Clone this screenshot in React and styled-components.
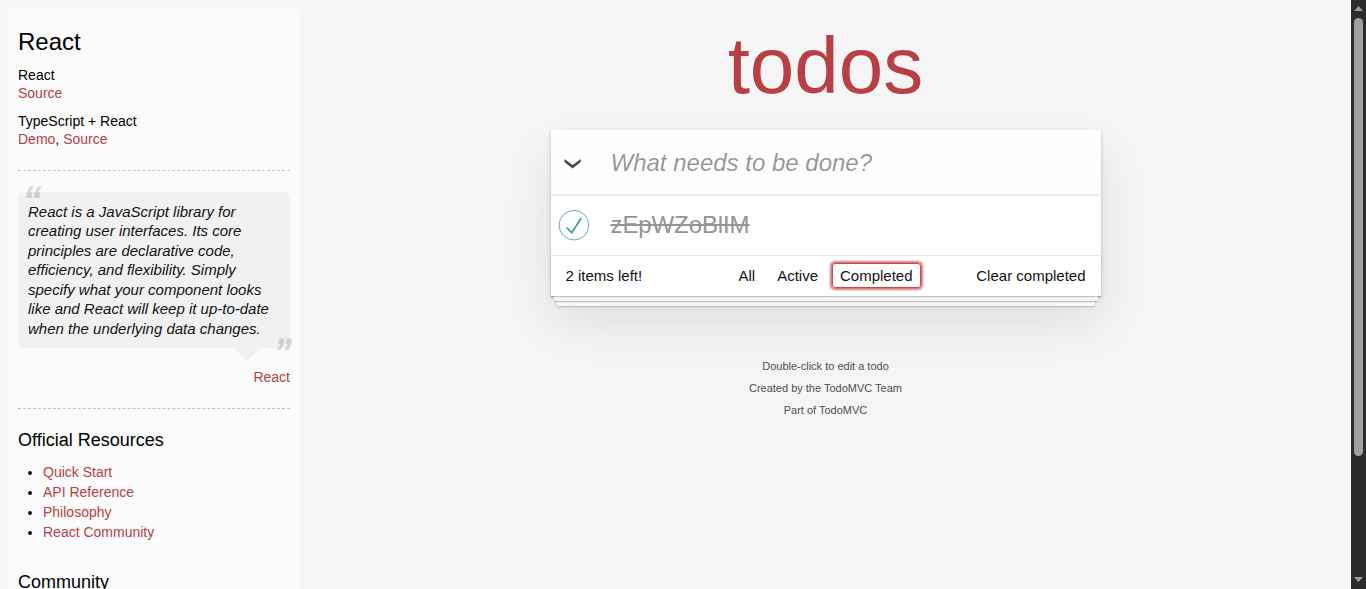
import React from 'react';
import styled, { createGlobalStyle, css } from 'styled-components';

const GlobalStyle = createGlobalStyle`
  html, body { margin: 0; padding: 0; height: 589px; overflow: hidden; }
  body {
    background: #f5f5f5;
    color: #111;
    font: 14px/1.4em "Liberation Sans", Arial, sans-serif;
    font-weight: 300;
  }
`;

const Page = styled.div`
  display: flex;
  height: 589px;
  overflow: hidden;
`;

const link = css`
  color: #b83f45;
  text-decoration: none;
  font-weight: 400;
`;
const Link = styled.a`${link}`;

const Sidebar = styled.aside`
  flex: none;
  box-sizing: border-box;
  width: 292px;
  height: 700px;
  margin: 8px 0 0 8px;
  padding: 10px;
  border-radius: 5px;
  background: rgba(255, 255, 255, 0.6);
`;
const Title = styled.h3`
  margin: 10px 0 9px;
  font-size: 24px;
  font-weight: 500;
  line-height: 1.2;
  color: #000;
`;
const Heading = styled.h4`
  margin: 0 0 11px;
  font-size: 18px;
  font-weight: 500;
  line-height: 1.2;
  color: #000;
`;
const Source = styled.section`
  margin-bottom: 10px;
  line-height: 18px;
`;
const SourceName = styled.h5`
  margin: 0;
  font-size: 14px;
  font-weight: 500;
  color: #000;
`;
const Divider = styled.hr`
  margin: ${({ $top }) => $top}px 0 20px;
  border: 0;
  border-top: 1px dashed #c5c5c5;
  border-bottom: 1px dashed #f7f7f7;
`;

const Quote = styled.blockquote`
  position: relative;
  margin: 0;
  padding: 10px;
  border-radius: 5px;
  background: rgba(0, 0, 0, 0.04);
  &::after {
    content: '';
    position: absolute;
    top: 100%;
    right: 30px;
    border: 13px solid transparent;
    border-top-color: rgba(0, 0, 0, 0.04);
  }
`;
const QuoteText = styled.p`
  margin: 0;
  font-size: 15px;
  font-style: italic;
  line-height: 19.5px;
`;
const QuoteMark = styled.span`
  position: absolute;
  font: italic 48px/70px "Liberation Sans", Arial, sans-serif;
  -webkit-text-stroke: 0.8px currentColor;
  opacity: 0.15;
  ${({ $end }) => ($end ? 'right: 0; bottom: -43px;' : 'left: 5px; top: -23px;')}
`;
const QuoteSource = styled.footer`
  margin-top: 20px;
  text-align: right;
`;
const Resources = styled.ul`
  margin: 0 0 30px 25px;
  padding: 0;
  line-height: 20px;
`;

const Content = styled.main`
  flex: 1;
  display: flex;
  flex-direction: column;
  align-items: center;
`;
const Brand = styled.h1`
  box-sizing: border-box;
  height: 130px;
  margin: 0;
  padding-top: 10px;
  font-size: 80px;
  font-weight: 200;
  line-height: 112px;
  color: #b83f45;
`;
const Card = styled.section`
  width: 550px;
  background: #fff;
  box-shadow: 0 2px 4px rgba(0, 0, 0, 0.2), 0 25px 50px rgba(0, 0, 0, 0.1);
`;
const NewTodo = styled.div`
  display: flex;
  align-items: center;
  height: 65.4px;
  background: rgba(0, 0, 0, 0.003);
  box-shadow: inset 0 -2px 1px rgba(0, 0, 0, 0.03);
`;
const Slot = styled.div`
  flex: none;
  display: flex;
  width: 60px;
`;
const Chevron = styled.svg`
  width: 18px;
  height: 10px;
  margin: 3px 0 0 13px;
`;
const Placeholder = styled.span`
  font-size: 24px;
  font-style: italic;
  font-weight: 400;
  color: rgba(0, 0, 0, 0.42);
`;
const Todo = styled.div`
  display: flex;
  align-items: center;
  height: 58.8px;
  border-top: 1px solid #e6e6e6;
`;
const Check = styled.svg`
  width: 40px;
  height: 40px;
  margin-bottom: 2px;
`;
const TodoLabel = styled.span`
  font-size: 24px;
  font-weight: 400;
  line-height: 1.2;
  letter-spacing: -0.1px;
  color: #949494;
  text-decoration: line-through;
`;
const Footer = styled.footer`
  display: grid;
  grid-template-columns: 1fr auto 1fr;
  align-items: center;
  height: 40px;
  padding: 0 15px;
  border-top: 1px solid #e6e6e6;
  font-size: 15px;
  box-shadow: 0 1px 1px rgba(0, 0, 0, 0.2), 0 8px 0 -3px #f6f6f6,
    0 9px 1px -3px rgba(0, 0, 0, 0.2), 0 16px 0 -6px #f6f6f6,
    0 17px 2px -6px rgba(0, 0, 0, 0.2);
`;
const Filters = styled.nav`
  display: flex;
  margin-bottom: 1px;
`;
const Filter = styled.a`
  margin: 3px;
  padding: 3px 7px;
  border: 1px solid ${({ $selected }) => ($selected ? '#ce4646' : 'transparent')};
  border-radius: 3px;
  line-height: 17px;
  box-shadow: ${({ $selected }) => ($selected ? '0 0 2px 2px #cf7d7d' : 'none')};
`;
const Clear = styled.span`
  text-align: right;
`;
const Info = styled.footer`
  margin-top: 65px;
  font-size: 11px;
  line-height: 11px;
  text-align: center;
  color: #4d4d4d;
  text-shadow: 0 1px 0 rgba(255, 255, 255, 0.5);
`;
const InfoLine = styled.p`
  margin: 0 0 11px;
`;

const Scrollbar = styled.div`
  flex: none;
  box-sizing: border-box;
  display: flex;
  flex-direction: column;
  align-items: center;
  width: 15px;
  padding: 6px 0 7px;
  background: #2c2c2c;
`;
const Thumb = styled.div`
  width: 9px;
  height: 438px;
  margin: 7px 0 auto;
  border-radius: 5px;
  background: #9f9f9f;
`;
const Arrow = styled.svg`
  display: block;
  width: 9px;
  height: 5px;
`;

const resources = ['Quick Start', 'API Reference', 'Philosophy', 'React Community'];
const filters = ['All', 'Active', 'Completed'];
const notes = ['Double-click to edit a todo', 'Created by the TodoMVC Team', 'Part of TodoMVC'];

export default function App() {
  return (
    <Page>
      <GlobalStyle />
      <Sidebar>
        <Title>React</Title>
        <Source>
          <SourceName>React</SourceName>
          <Link>Source</Link>
        </Source>
        <Source>
          <SourceName>TypeScript + React</SourceName>
          <Link>Demo</Link>, <Link>Source</Link>
        </Source>
        <Divider $top={22} />
        <Quote>
          <QuoteMark>“</QuoteMark>
          <QuoteText>
            React is a JavaScript library for creating user interfaces. Its core principles are
            declarative code, efficiency, and flexibility. Simply specify what your component looks
            like and React will keep it up-to-date when the underlying data changes.
          </QuoteText>
          <QuoteMark $end>”</QuoteMark>
        </Quote>
        <QuoteSource><Link>React</Link></QuoteSource>
        <Divider $top={20} />
        <Heading>Official Resources</Heading>
        <Resources>
          {resources.map((name) => <li key={name}><Link>{name}</Link></li>)}
        </Resources>
        <Heading>Community</Heading>
      </Sidebar>
      <Content>
        <Brand>todos</Brand>
        <Card>
          <NewTodo>
            <Slot>
              <Chevron viewBox="0 0 18 10">
                <path d="M.4 0 8.6 6 16.8 0v3L8.6 9.6.4 3z" fill="#484848" />
              </Chevron>
            </Slot>
            <Placeholder>What needs to be done?</Placeholder>
          </NewTodo>
          <Todo>
            <Slot>
              <Check viewBox="-10 -18 100 135">
                <circle cx="50" cy="50" r="50" fill="none" stroke="#59A193" strokeWidth="3" />
                <path fill="#3EA390" d="M72 25L42 71 27 56l-4 4 20 20 34-52z" />
              </Check>
            </Slot>
            <TodoLabel>zEpWZoBlIM</TodoLabel>
          </Todo>
          <Footer>
            <span>2 items left!</span>
            <Filters>
              {filters.map((name) => (
                <Filter key={name} $selected={name === 'Completed'}>{name}</Filter>
              ))}
            </Filters>
            <Clear>Clear completed</Clear>
          </Footer>
        </Card>
        <Info>
          {notes.map((note) => <InfoLine key={note}>{note}</InfoLine>)}
        </Info>
      </Content>
      <Scrollbar>
        <Arrow viewBox="0 0 9 5"><path d="M4.5 0 9 5H0z" fill="#9f9f9f" /></Arrow>
        <Thumb />
        <Arrow viewBox="0 0 9 5"><path d="M0 0h9L4.5 5z" fill="#9f9f9f" /></Arrow>
      </Scrollbar>
    </Page>
  );
}
